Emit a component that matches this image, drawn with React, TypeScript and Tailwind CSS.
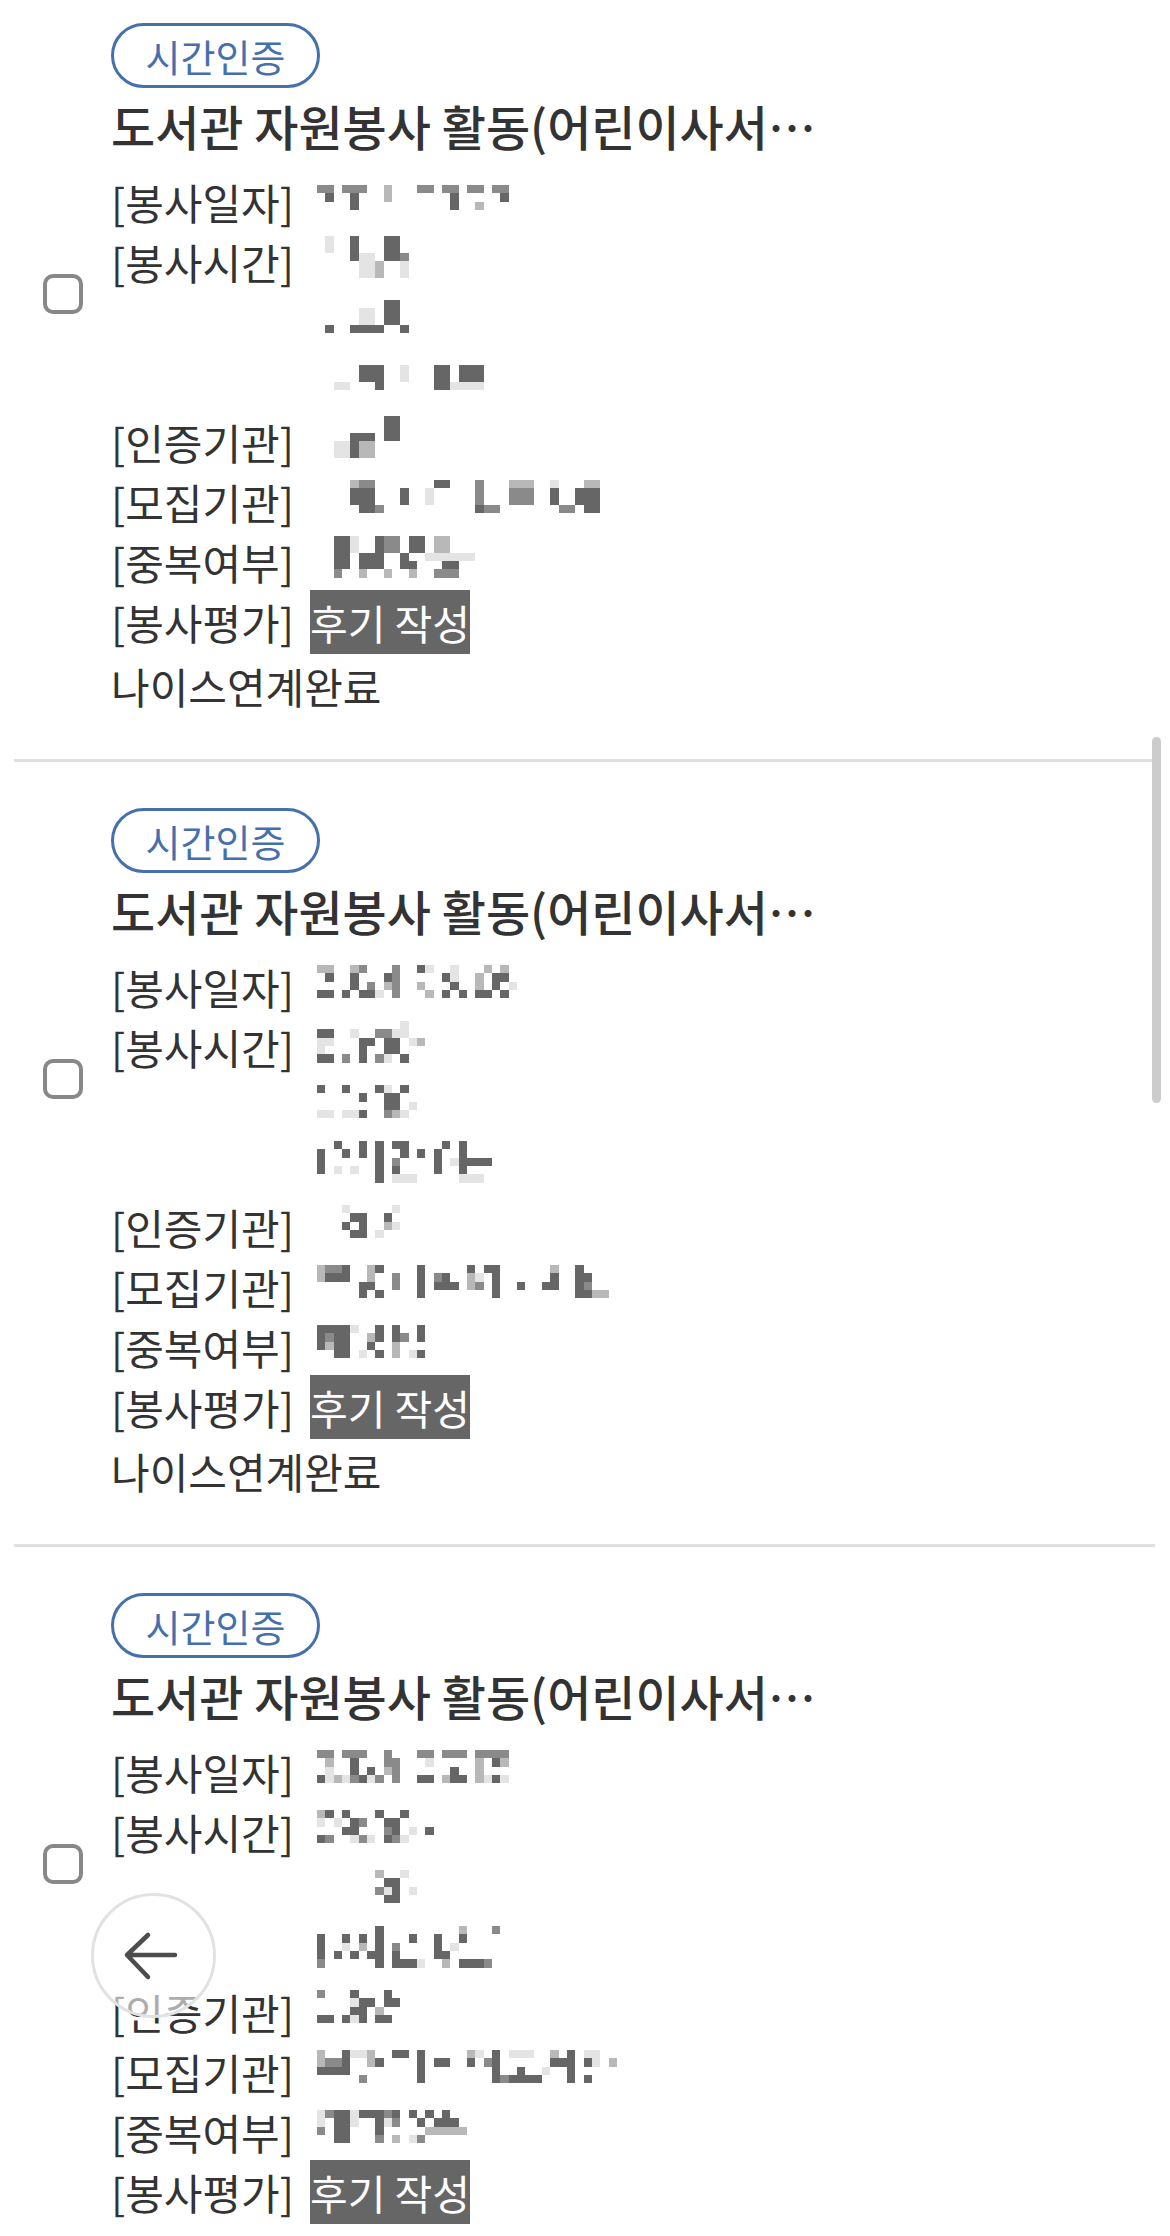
import React from "react";

type Entry = {
  date: string[];
  time: string[][];
  cert: string[];
  recruit: string[];
  dup: string[];
};

const shades: Record<string, string> = {
  "1": "#666666",
  "2": "#8a8a8a",
  "3": "#b8b8b8",
  "4": "#e4e4e4",
};

const entries: Entry[] = [
  {
    date: ["22.222..3...22.22.22.22", ".1..1...3.......1.....1", "....1...........1..3..."],
    time: [
      [".4..1...11", ".4..1...11", "....144.112", ".....443..4", ".....443..4"],
      ["........11", ".....44.11", ".....44.11", ".1..1111..1"],
      [".....111..4...11.111", ".....111..4...11.111", "..44...1......114444"],
    ],
    cert: ["........11", "........11", "....111.11", "..44133", "..44133"],
    recruit: [
      "....322.......11...2...333..4...33",
      "....111...1..4.....2...222..1..111",
      "....111...1..4.....2...222..1..111",
      ".....112...........122.......22.11",
    ],
    dup: ["..114..122.11.33", "..114..122.11.33", "..11.111..1..444444", "..11.111..11...11", "..2..3..3..3..222"],
  },
  {
    date: ["33..32...2..14..4...3.3", ".1..1...12.....14..3.11", "....1.2.32..3...1..3.1.4", "11.1.114.2...3.1.1.11.1"],
    time: [
      ["..........4", "11..4..2244", "44...11.11.43", "4....1..11", "11.2.1.24.1"],
      ["1..1...14.1", ".....1..11", "........11.4", "44.441..234"],
      ["..1..1.1.11....1.1", "1..1.1.1..1.1.1..1", "1......1.2....1.41111", "1.4.4..1.1....1..1", ".......1.444.....444"],
    ],
    cert: ["...4.....4", "....11..1", "...1.1..34", "....11.4"],
    recruit: [
      "3221..31....1.....1.11......3..1",
      "3111..3..2..1.21..34.1......1..11",
      ".....11..2..1.111.32.1..1..11..12",
      ".....1.1....1........1.........1133",
    ],
    dup: ["11114..1.1..1", "1211..31.12.1", "1311..1..3", "..11.4.1.3.41"],
  },
  {
    date: ["22.222..2...22.222.2222", ".3..1...22...4.....3.13", ".4..1.1.32......1..3", "14342142.2..11.311.3414"],
    time: [
      ["31.1...1..1", "4.4.12..11", "...11...21.4.1", "12..424.124"],
      [".......3..4", "........11", ".......241.4", "........11"],
      [".......1.........3...2", "1..1.1.1...1..1..1", "1..4.3.1.2....1.4", "1.1.1.11.1....11", "2......1.1114..3.1112"],
    ],
    cert: ["2...1...1", "....411.11", "....11.3", "11.141.11"],
    recruit: [
      "3..1443..11.1.....34.1.444..3.1.44",
      "3221..31....1.11..1.21......111.14.3",
      "1111........1........1..1..4..1",
      ".....2......1........121111...1.1",
    ],
    dup: ["4211411121.1.1.1", "4.114..142..1.111", "2.11...1.....33333", "..11...2.3.42"],
  },
];

function Mosaic({ rows }: { rows: string[] }) {
  const cols = Math.max(...rows.map((r) => r.length));
  const cell = 25 / 3;
  return (
    <svg
      width={cols * cell}
      height={rows.length * cell}
      viewBox={`0 0 ${cols} ${rows.length}`}
      shapeRendering="crispEdges"
      className="ml-[7px] block"
    >
      {rows.flatMap((row, y) =>
        row.split("").map((ch, x) =>
          ch === "." ? null : <rect key={`${x}-${y}`} x={x} y={y} width={1} height={1} fill={shades[ch]} />
        )
      )}
    </svg>
  );
}

function Line({ children }: { children?: React.ReactNode }) {
  return <div className="flex h-[60px] items-center pb-[10px]">{children}</div>;
}

function Row({ label, children }: { label: string; children: React.ReactNode }) {
  return (
    <div className="flex">
      <div className="h-[60px] w-[199px] shrink-0 whitespace-nowrap leading-[60px]">{label}</div>
      <div className="flex flex-col">{children}</div>
    </div>
  );
}

function Checkbox() {
  return <div className="h-[40px] w-[40px] rounded-[10px] border-[4px] border-[#888888]" />;
}

function VolunteerItem({ item }: { item: Entry }) {
  return (
    <div className="flex pb-[43px] pl-[43px] pt-[46px]">
      <div className="mt-[251px] shrink-0">
        <Checkbox />
      </div>
      <div className="ml-[28px] flex flex-col">
        <div className="flex h-[65px] w-[209px] items-center justify-center rounded-full border-[3px] border-[#4670ad] text-[38px] leading-none text-[#4670ad]">
          시간인증
        </div>
        <div className="mt-[6px] whitespace-nowrap text-[48px] font-medium leading-[62px] text-[#333333]">
          도서관 자원봉사 활동(어린이사서…
        </div>
        <div className="mt-[16px] text-[42px] text-[#333333]">
          <Row label="[봉사일자]">
            <Line>
              <Mosaic rows={item.date} />
            </Line>
          </Row>
          <Row label="[봉사시간]">
            {item.time.map((t, i) => (
              <Line key={i}>
                <Mosaic rows={t} />
              </Line>
            ))}
          </Row>
          <Row label="[인증기관]">
            <Line>
              <Mosaic rows={item.cert} />
            </Line>
          </Row>
          <Row label="[모집기관]">
            <Line>
              <Mosaic rows={item.recruit} />
            </Line>
          </Row>
          <Row label="[중복여부]">
            <Line>
              <Mosaic rows={item.dup} />
            </Line>
          </Row>
          <Row label="[봉사평가]">
            <div className="flex h-[60px] items-center">
              <span className="inline-block h-[64px] whitespace-nowrap bg-[#666666] text-[41px] leading-[64px] text-white">후기 작성</span>
            </div>
          </Row>
          <div className="mt-[4px] h-[60px] leading-[60px]">나이스연계완료</div>
        </div>
      </div>
    </div>
  );
}

export default function App() {
  return (
    <div className="relative h-[2236px] w-[1170px] overflow-hidden bg-white font-['Noto_Sans_CJK_KR','Noto_Sans',sans-serif]">
      <div className="-mt-[23px]">
        {entries.map((item, i) => (
          <div key={i}>
            <VolunteerItem item={item} />
            {i < entries.length - 1 && <div className="ml-[14px] h-[3px] w-[1141px] bg-[#e0e0e0]" />}
          </div>
        ))}
      </div>

      {/* scroll indicator */}
      <div className="absolute left-[1152px] top-[737px] h-[366px] w-[9px] rounded-full bg-[#cccccc]" />

      {/* floating back button */}
      <button className="absolute left-[91px] top-[1893px] h-[125px] w-[125px] rounded-full border-[3px] border-[#e2e2e2] bg-white/60">
        <svg viewBox="0 0 125 125" className="absolute -left-[3px] -top-[3px] h-[125px] w-[125px]" fill="none">
          <path d="M57 42 L36 62 L57 84 M36 62 H84" stroke="#4d4d4d" strokeWidth="4.5" strokeLinecap="round" strokeLinejoin="round" />
        </svg>
      </button>
    </div>
  );
}
